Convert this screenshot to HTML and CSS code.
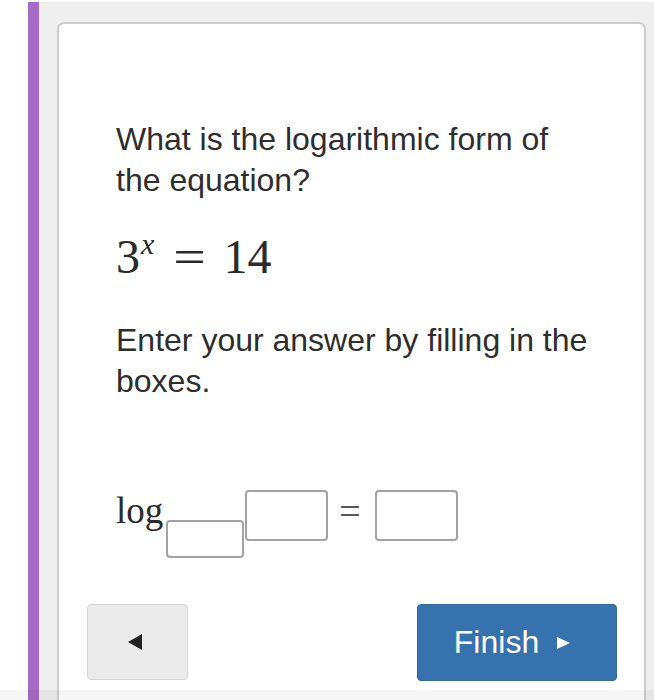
FILE: index.html
```html
<!DOCTYPE html>
<html>
<head>
<meta charset="utf-8">
<link rel="stylesheet" href="styles.css">
</head>
<body>
<div class="frame">
  <div class="accent"></div>
  <div class="stage">
    <div class="card">
      <div class="content">
        <p class="prompt">What is the logarithmic form of the equation?</p>
        <div class="equation"><span class="base">3</span><span class="exp">x</span><span class="eq">=</span><span class="num">14</span></div>
        <p class="prompt instr">Enter your answer by filling in the boxes.</p>
        <div class="logrow">
          <span class="log">log</span>
          <span class="box sub"></span>
          <span class="box arg"></span>
          <span class="leq">=</span>
          <span class="box res"></span>
        </div>
      </div>
      <div class="footer">
        <button class="btn back" aria-label="Back"><svg width="15" height="16" viewBox="0 0 15 16"><polygon points="14,0 14,16 0,8" fill="#222"/></svg></button>
        <button class="btn finish">Finish <svg width="13" height="12" viewBox="0 0 13 12"><polygon points="0,0 13,6 0,12" fill="#fff"/></svg></button>
      </div>
    </div>
  </div>
</div>
<div class="bottom-shade"></div>
</body>
</html>
```

FILE: styles.css
```css
html, body {
  margin: 0;
  padding: 0;
  background: #ffffff;
  height: 700px;
  overflow: hidden;
}
body {
  position: relative;
  font-family: "Liberation Sans", Arial, sans-serif;
  color: #2e2e2e;
}
.frame {
  display: flex;
  margin-top: 2px;
  margin-left: 28px;
  height: 698px;
}
.accent {
  width: 11px;
  background: #a66bc6;
  flex: none;
}
.stage {
  flex: 1;
  background: #efefef;
  padding: 20px 8px 0 18px;
}
.card {
  background: #ffffff;
  border: 2px solid #cdcdcd;
  border-bottom: none;
  border-radius: 7px 7px 0 0;
  height: 700px;
  box-sizing: border-box;
}
.content {
  padding: 95px 20px 0 57px;
}
.prompt {
  margin: 0;
  font-size: 32px;
  line-height: 41px;
  width: 476px;
}
.equation {
  margin-top: 28px;
  font-family: "Liberation Serif", "Times New Roman", serif;
  font-size: 48px;
  line-height: 56px;
  height: 56px;
  color: #2a2a2a;
}
.exp {
  font-style: italic;
  font-size: 30px;
  line-height: 1;
  vertical-align: 19px;
  margin-left: 1px;
}
.eq {
  display: inline-block;
  transform: scaleX(1.2);
  margin-left: 22px;
}
.num {
  margin-left: 20px;
}
.instr {
  margin-top: 35px;
}
.logrow {
  display: flex;
  align-items: flex-start;
  margin-top: 88px;
  height: 67px;
}
.log {
  font-family: "Liberation Serif", "Times New Roman", serif;
  font-size: 37px;
  line-height: 37px;
  margin-top: 2px;
  color: #2a2a2a;
}
.box {
  display: block;
  border: 2px solid #a3a3a3;
  border-radius: 4px;
  box-sizing: border-box;
  background: #fff;
}
.sub {
  width: 78px;
  height: 38px;
  margin-top: 30px;
  margin-left: 3px;
}
.arg {
  width: 83px;
  height: 51px;
  margin-left: 1px;
}
.leq {
  font-family: "Liberation Serif", "Times New Roman", serif;
  font-size: 38px;
  line-height: 50px;
  margin-left: 11px;
  margin-top: -4px;
  color: #555;
}
.res {
  width: 83px;
  height: 51px;
  margin-left: 14px;
}
.footer {
  display: flex;
  justify-content: space-between;
  align-items: flex-start;
  padding: 47px 27px 0 28px;
}
.btn {
  font-family: "Liberation Sans", Arial, sans-serif;
  border-radius: 4px;
  box-sizing: border-box;
  display: flex;
  align-items: center;
  justify-content: center;
  padding: 0;
  margin: 0;
}
.back {
  width: 101px;
  height: 76px;
  background: #ebebeb;
  border: 1px solid #d6d6d6;
}
.back svg {
  margin-left: -5px;
}
.finish {
  width: 200px;
  height: 77px;
  background: #3673ae;
  border: 1px solid #336ca3;
  color: #fff;
  font-size: 32px;
  gap: 18px;
  padding-right: 10px;
}
.bottom-shade {
  position: absolute;
  left: 0;
  right: 0;
  top: 690px;
  height: 10px;
  background: rgba(0, 0, 0, 0.035);
}
```
